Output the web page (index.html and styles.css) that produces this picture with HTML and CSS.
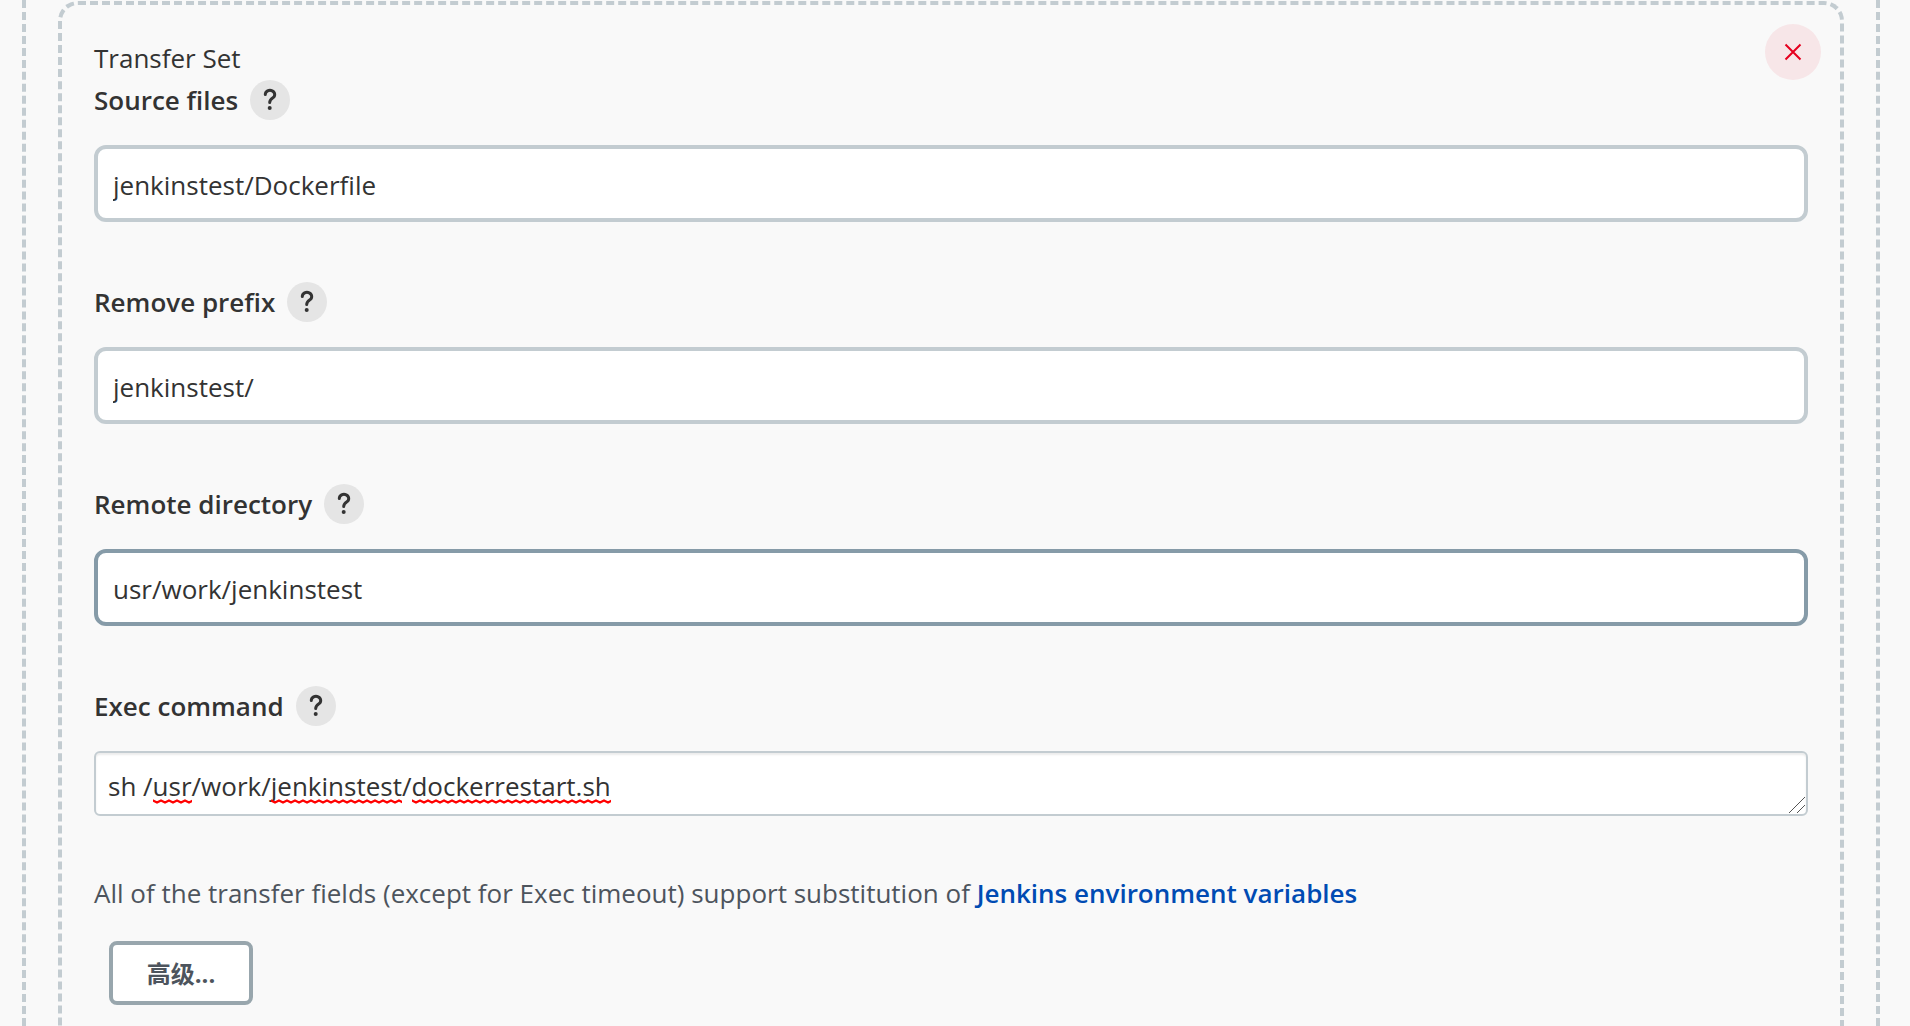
FILE: index.html
```html
<!DOCTYPE html>
<html lang="en">
<head>
<meta charset="utf-8">
<meta name="viewport" content="width=device-width, initial-scale=1">
<title>Transfer Set</title>
<link rel="stylesheet" href="styles.css">
</head>
<body>
<main class="publisher">
  <form class="transfer-set">
    <button class="remove" type="button" aria-label="Delete">
      <svg viewBox="0 0 18 18" aria-hidden="true"><path d="M1.5 1.5l15 15M16.5 1.5l-15 15"/></svg>
    </button>
    <div class="set-title">Transfer Set</div>

    <div class="field">
      <div class="field-head">
        <label for="source">Source files</label>
        <button class="help" type="button" aria-label="Help for Source files"><svg viewBox="0 0 40 40" aria-hidden="true"><path d="M15.300 14.500a4.700 4.200 0 1 1 7.300 3.500c-1.900 1.300-2.900 2-2.900 4.500"/><circle cx="19.700" cy="28" r="2"/></svg></button>
      </div>
      <input class="text" id="source" type="text" value="jenkinstest/Dockerfile">
    </div>

    <div class="field">
      <div class="field-head">
        <label for="prefix">Remove prefix</label>
        <button class="help" type="button" aria-label="Help for Remove prefix"><svg viewBox="0 0 40 40" aria-hidden="true"><path d="M15.300 14.500a4.700 4.200 0 1 1 7.300 3.500c-1.900 1.300-2.900 2-2.900 4.500"/><circle cx="19.700" cy="28" r="2"/></svg></button>
      </div>
      <input class="text" id="prefix" type="text" value="jenkinstest/">
    </div>

    <div class="field">
      <div class="field-head">
        <label for="directory">Remote directory</label>
        <button class="help" type="button" aria-label="Help for Remote directory"><svg viewBox="0 0 40 40" aria-hidden="true"><path d="M15.300 14.500a4.700 4.200 0 1 1 7.300 3.500c-1.900 1.300-2.900 2-2.900 4.500"/><circle cx="19.700" cy="28" r="2"/></svg></button>
      </div>
      <input class="text active" id="directory" type="text" value="usr/work/jenkinstest">
    </div>

    <div class="field command">
      <div class="field-head">
        <label for="command">Exec command</label>
        <button class="help" type="button" aria-label="Help for Exec command"><svg viewBox="0 0 40 40" aria-hidden="true"><path d="M15.300 14.500a4.700 4.200 0 1 1 7.300 3.500c-1.900 1.300-2.900 2-2.900 4.500"/><circle cx="19.700" cy="28" r="2"/></svg></button>
      </div>
      <div class="editor">
        <textarea id="command" rows="1" spellcheck="false">sh /usr/work/jenkinstest/dockerrestart.sh</textarea>
        <div class="spelling" aria-hidden="true">sh /<span>usr</span>/work/<span>jenkinstest</span>/<span>dockerrestart.sh</span></div>
        <svg class="grip" viewBox="0 0 16 16" aria-hidden="true"><path d="M0 16L16 0M8 16l8-8"/></svg>
      </div>
    </div>

    <p class="note">All of the transfer fields (except for Exec timeout) support substitution of <a href="#variables">Jenkins environment variables</a></p>
    <button class="advanced" type="button">高级...</button>
  </form>
</main>
</body>
</html>
```
FILE: styles.css
```css
* { box-sizing: border-box; }

body {
  margin: 0;
  background: #f9f9f9;
  color: #333;
  font: 26px/43px "Segoe UI", "Open Sans", "Noto Sans CJK SC", sans-serif;
}

button, input, textarea { font: inherit; color: inherit; }

.publisher {
  display: flex;
  min-height: 100vh;
  margin: 0 30px 0 22px;
  padding: 1px 32px 0;
  border: dashed #c3ccd1;
  border-width: 0 4px;
}

.transfer-set {
  position: relative;
  flex: 1;
  min-width: 0;
  padding: 32px 32px 20px;
  border: 4px dashed #c3ccd1;
  border-bottom: 0;
  border-radius: 20px 20px 0 0;
}

.remove {
  position: absolute;
  top: 19px;
  right: 19px;
  display: grid;
  place-items: center;
  width: 56px;
  height: 56px;
  padding: 0;
  border: 0;
  border-radius: 50%;
  background: #f7e6e8;
}

.remove svg { width: 18px; height: 18px; fill: none; stroke: #e6001f; stroke-width: 2; }

.field { margin-bottom: 60px; }

.field.command { margin-bottom: 56px; }

.field-head {
  display: flex;
  align-items: center;
  gap: 12px;
  height: 40px;
  margin-bottom: 25px;
  font-weight: 600;
}

.help {
  width: 40px;
  height: 40px;
  padding: 0;
  border: 0;
  border-radius: 50%;
  background: #e5e5e5;
}

.help svg { display: block; fill: none; stroke: #333; stroke-width: 3; stroke-linecap: round; }
.help circle { fill: #333; stroke: none; }

.text {
  display: block;
  width: 100%;
  height: 77px;
  padding: 2px 15px 0;
  border: 4px solid #c3ccd1;
  border-radius: 12px;
  background: #fff;
  outline: 0;
}

.text.active { border-color: #869ba8; }

.editor { display: grid; }

.editor > * { grid-area: 1 / 1; }

.editor textarea, .spelling {
  width: 100%;
  height: 65px;
  padding: 12px;
  border: 2px solid #c3ccd1;
  border-radius: 6px;
  overflow: hidden;
}

.editor textarea {
  background: #fff;
  box-shadow: inset 0 2px 2px #ececec;
  outline: 0;
  resize: none;
}

.spelling { border-color: transparent; color: transparent; pointer-events: none; }

.spelling span {
  background: url("data:image/svg+xml,%3Csvg xmlns='http://www.w3.org/2000/svg' width='8' height='5'%3E%3Cpath d='M-4 3.500L0 1.500L4 3.500L8 1.500L12 3.500' fill='none' stroke='red' stroke-width='2.200'/%3E%3C/svg%3E") left bottom repeat-x;
}

.grip {
  place-self: end;
  width: 16px;
  height: 16px;
  margin: 3px;
  fill: none;
  stroke: #555;
}

.note { margin: 0 0 26px; color: #4d545d; }

.note a { color: #004bb3; font-weight: 600; text-decoration: none; }

.advanced {
  display: block;
  height: 64px;
  min-width: 144px;
  margin-left: 15px;
  padding: 0 32px;
  border: 4px solid #98a6ad;
  border-radius: 8px;
  background: #fff;
  color: #4d545d;
  font-size: 24px;
  font-weight: 700;
}
```
